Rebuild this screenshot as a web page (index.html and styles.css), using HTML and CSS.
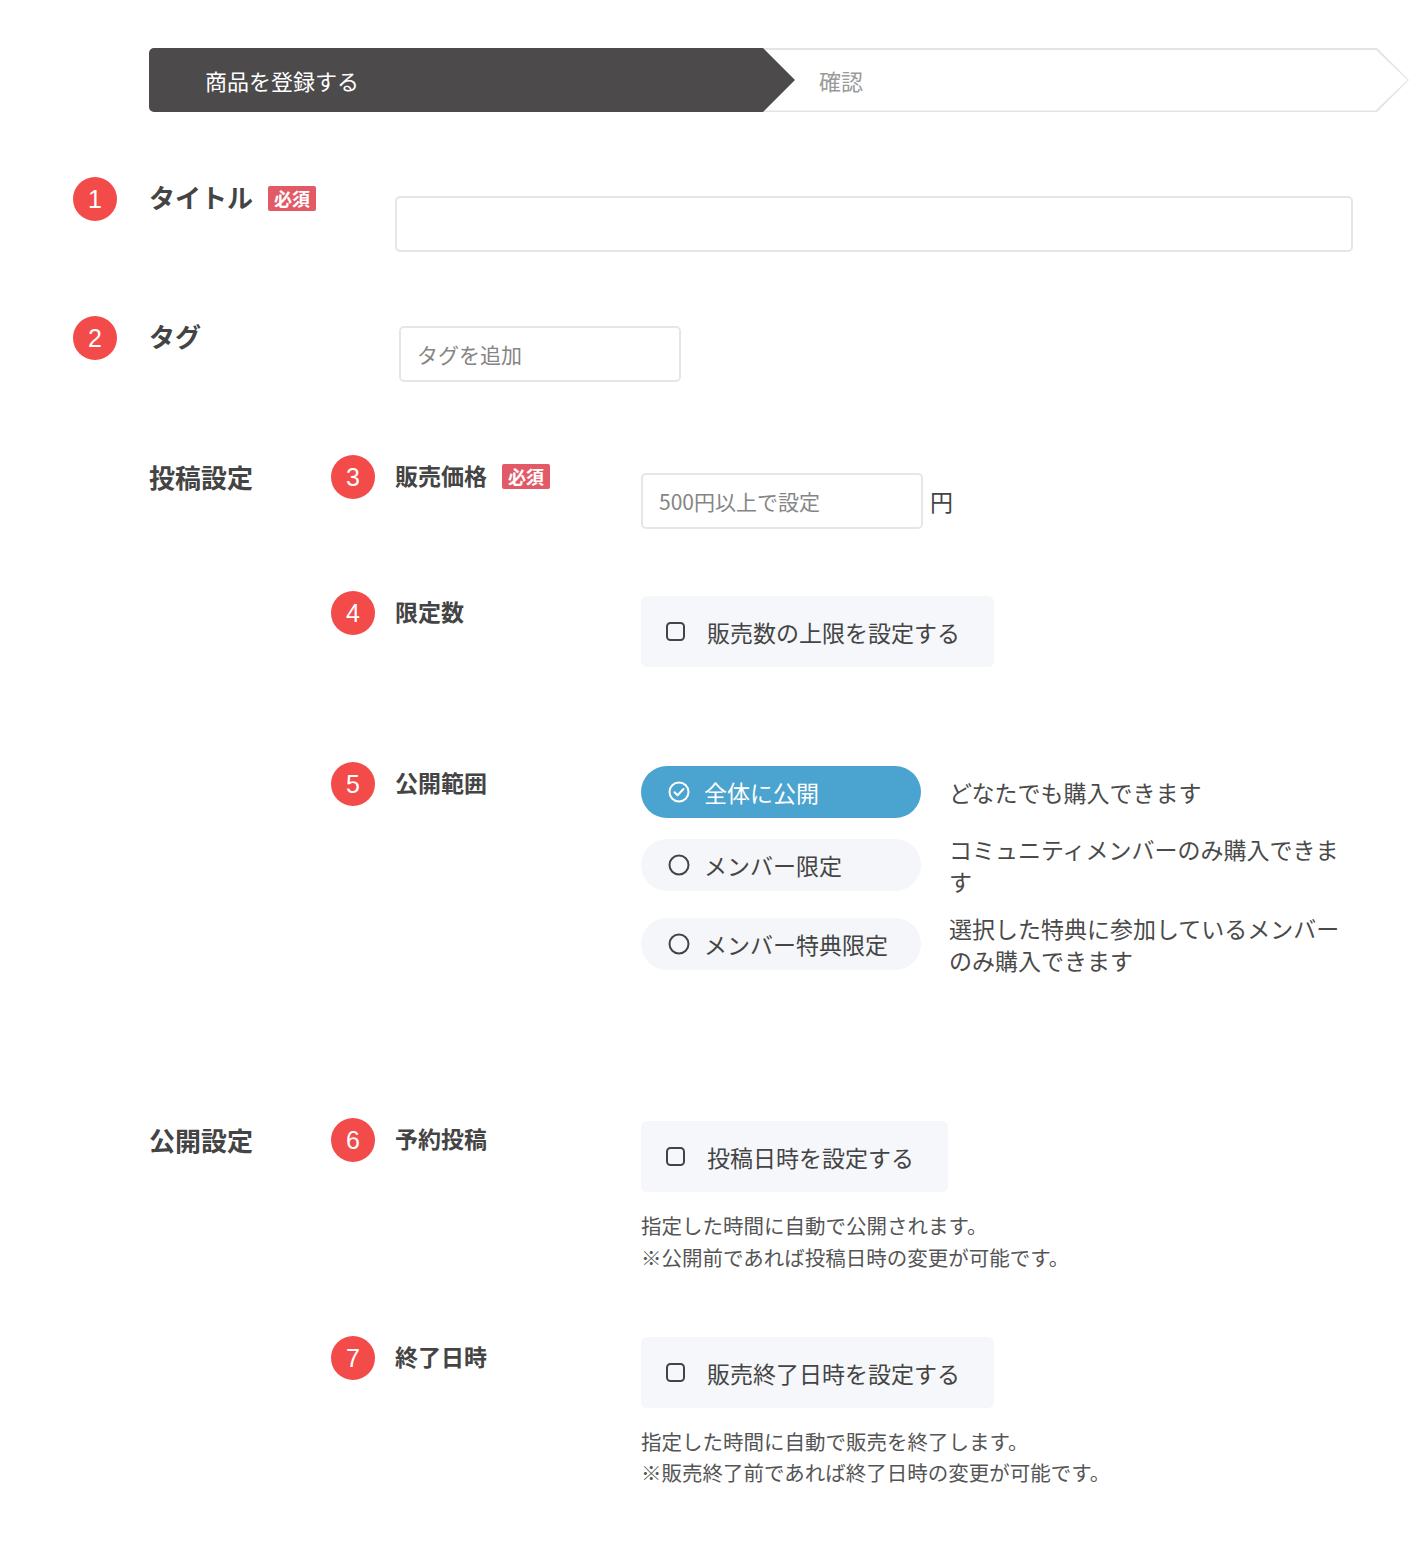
FILE: index.html
```html
<!DOCTYPE html>
<html lang="ja">
<head>
  <meta charset="UTF-8">
  <title>商品を登録する</title>
  <link rel="stylesheet" href="styles.css">
</head>
<body>
  <div class="page">
    <div class="steps">
      <div class="step step-current">商品を登録する</div>
      <div class="step step-next"><span>確認</span></div>
    </div>

    <div class="form">
      <div class="row">
        <div class="head head-outer">
          <span class="num">1</span>
          <span class="label label-lg">タイトル</span>
          <span class="badge">必須</span>
        </div>
        <input class="input input-title" type="text">
      </div>

      <div class="row row-tag">
        <div class="head head-outer">
          <span class="num">2</span>
          <span class="label label-lg">タグ</span>
        </div>
        <input class="input input-tag" type="text" placeholder="タグを追加">
      </div>

      <div class="section section-post">
        <div class="section-title">投稿設定</div>
        <div class="section-body">
          <div class="row">
            <div class="head head-inner">
              <span class="num">3</span>
              <span class="label">販売価格</span>
              <span class="badge">必須</span>
            </div>
            <div class="price">
              <input class="input input-price" type="text" placeholder="500円以上で設定">
              <span class="unit">円</span>
            </div>
          </div>

          <div class="row row-limit">
            <div class="head head-inner">
              <span class="num">4</span>
              <span class="label">限定数</span>
            </div>
            <div class="field field-check">
              <label class="check">
                <svg width="19" height="19" viewBox="0 0 19 19"><rect x="1" y="1" width="17" height="17" rx="3.5" fill="none" stroke="#444" stroke-width="2"/></svg>
                販売数の上限を設定する
              </label>
            </div>
          </div>

          <div class="row row-scope">
            <div class="head head-inner">
              <span class="num">5</span>
              <span class="label">公開範囲</span>
            </div>
            <div class="options">
              <div class="option">
                <div class="pill active">
                  <svg width="22" height="22" viewBox="0 0 22 22"><circle cx="11" cy="11" r="9.5" fill="none" stroke="#fff" stroke-width="2"/><path d="M6.5 11.2l3 3 6-6.2" fill="none" stroke="#fff" stroke-width="2" stroke-linecap="round" stroke-linejoin="round"/></svg>
                  全体に公開
                </div>
                <div class="option-desc">どなたでも購入できます</div>
              </div>
              <div class="option">
                <div class="pill">
                  <svg width="22" height="22" viewBox="0 0 22 22"><circle cx="11" cy="11" r="9.5" fill="none" stroke="#444" stroke-width="2"/></svg>
                  メンバー限定
                </div>
                <div class="option-desc">コミュニティメンバーのみ購入できます</div>
              </div>
              <div class="option">
                <div class="pill">
                  <svg width="22" height="22" viewBox="0 0 22 22"><circle cx="11" cy="11" r="9.5" fill="none" stroke="#444" stroke-width="2"/></svg>
                  メンバー特典限定
                </div>
                <div class="option-desc">選択した特典に参加しているメンバーのみ購入できます</div>
              </div>
            </div>
          </div>
        </div>
      </div>

      <div class="section section-publish">
        <div class="section-title">公開設定</div>
        <div class="section-body">
          <div class="row">
            <div class="head head-inner">
              <span class="num">6</span>
              <span class="label">予約投稿</span>
            </div>
            <div class="field field-reserve">
              <label class="check">
                <svg width="19" height="19" viewBox="0 0 19 19"><rect x="1" y="1" width="17" height="17" rx="3.5" fill="none" stroke="#444" stroke-width="2"/></svg>
                投稿日時を設定する
              </label>
              <p class="note">指定した時間に自動で公開されます。<br>※公開前であれば投稿日時の変更が可能です。</p>
            </div>
          </div>

          <div class="row row-end">
            <div class="head head-inner">
              <span class="num">7</span>
              <span class="label">終了日時</span>
            </div>
            <div class="field field-end">
              <label class="check">
                <svg width="19" height="19" viewBox="0 0 19 19"><rect x="1" y="1" width="17" height="17" rx="3.5" fill="none" stroke="#444" stroke-width="2"/></svg>
                販売終了日時を設定する
              </label>
              <p class="note note-end">指定した時間に自動で販売を終了します。<br>※販売終了前であれば終了日時の変更が可能です。</p>
            </div>
          </div>
        </div>
      </div>
    </div>
  </div>
</body>
</html>
```

FILE: styles.css
```css
html, body {
  margin: 0;
  padding: 0;
  background: #fff;
  font-family: 'Noto Sans CJK JP', sans-serif;
  color: #444;
}

.page {
  padding: 48px 0 70px;
}

/* ステップ */
.steps {
  display: flex;
  margin-left: 149px;
  height: 64px;
}

.step {
  width: 646px;
  height: 64px;
  box-sizing: border-box;
  font-size: 22px;
  line-height: 64px;
  clip-path: polygon(0 0, calc(100% - 32px) 0, 100% 50%, calc(100% - 32px) 100%, 0 100%);
}

.step-current {
  position: relative;
  z-index: 1;
  background: #4c4a4b;
  color: #fff;
  padding-left: 56px;
  border-radius: 5px 0 0 5px;
}

.step-next {
  margin-left: -32px;
  padding: 1.5px 1.5px 1.5px 0;
  background: #e4e4e4;
}

.step-next span {
  display: block;
  height: 61px;
  line-height: 61px;
  padding-left: 56px;
  background: #fff;
  color: #9a9a9a;
  clip-path: polygon(0 0, calc(100% - 32px) 0, 100% 50%, calc(100% - 32px) 100%, 0 100%);
}

/* フォーム */
.form {
  margin-top: 65px;
  padding-left: 73px;
}

.row {
  display: flex;
  align-items: flex-start;
}

.head {
  display: flex;
  align-items: center;
  flex-shrink: 0;
}

.head-outer {
  width: 322px;
}

.head-inner {
  width: 310px;
}

.num {
  width: 44px;
  height: 44px;
  border-radius: 50%;
  background: #f34a4a;
  color: #fff;
  font-family: 'Liberation Sans', sans-serif;
  font-size: 25px;
  line-height: 44px;
  text-align: center;
  flex-shrink: 0;
  margin-right: 32px;
}

.head-inner .num {
  margin-right: 20px;
}

.label {
  font-size: 23px;
  font-weight: 700;
  line-height: 40px;
  margin-bottom: 4px;
}

.label-lg {
  font-size: 26px;
}

.badge {
  margin-left: 15px;
  margin-bottom: 2px;
  padding: 0 6px;
  height: 25px;
  line-height: 25px;
  font-size: 18px;
  font-weight: 700;
  color: #fff;
  background: #e15a66;
  border-radius: 2px;
}

.input {
  box-sizing: border-box;
  height: 56px;
  border: 2px solid #e6e6e6;
  border-radius: 5px;
  padding: 0 16px;
  font-family: inherit;
  font-size: 21px;
  color: #444;
  background: #fff;
  outline: none;
}

.input::placeholder {
  color: #858585;
}

.input-title {
  width: 958px;
  margin-top: 19px;
}

.row-tag {
  margin-top: 64px;
}

.input-tag {
  width: 282px;
  margin: 10px 0 0 4px;
}

.section {
  display: flex;
  align-items: flex-start;
}

.section-post {
  margin-top: 73px;
}

.section-publish {
  margin-top: 142px;
}

.section-title {
  width: 258px;
  padding-left: 76px;
  box-sizing: border-box;
  flex-shrink: 0;
  font-size: 26px;
  font-weight: 700;
  line-height: 44px;
}

.section-body {
  display: flex;
  flex-direction: column;
}

.price {
  display: flex;
  align-items: center;
  margin-top: 18px;
}

.input-price {
  width: 282px;
}

.unit {
  margin-left: 7px;
  font-size: 23px;
}

.row-limit {
  margin-top: 62px;
}

.row-scope {
  margin-top: 95px;
}

.row-end {
  margin-top: 63px;
}

.field {
  display: flex;
  flex-direction: column;
  align-items: flex-start;
}

.field-check {
  margin-top: 5px;
}

.field-reserve {
  margin-top: 3px;
}

.field-end {
  margin-top: 1px;
}

.check {
  display: inline-flex;
  align-items: center;
  gap: 22px;
  height: 71px;
  padding: 0 34px 0 25px;
  background: #f5f7fa;
  border-radius: 6px;
  font-size: 23px;
  cursor: pointer;
}

.note {
  margin: 17px 0 0;
  font-size: 20.5px;
  line-height: 32px;
  color: #555;
}

.note-end {
  margin-top: 18px;
  line-height: 31px;
}

/* 公開範囲 */
.options {
  display: flex;
  flex-direction: column;
  gap: 15px;
  margin-top: 4px;
}

.option {
  display: flex;
  align-items: center;
  gap: 28px;
}

.pill {
  display: flex;
  align-items: center;
  gap: 14px;
  width: 280px;
  height: 52px;
  box-sizing: border-box;
  padding-left: 27px;
  border-radius: 26px;
  background: #f4f6f9;
  font-size: 23px;
  flex-shrink: 0;
}

.pill.active {
  background: #4ba3d0;
  color: #fff;
}

.option-desc {
  width: 410px;
  font-size: 23px;
  line-height: 32px;
  color: #4a4a4a;
}
```
